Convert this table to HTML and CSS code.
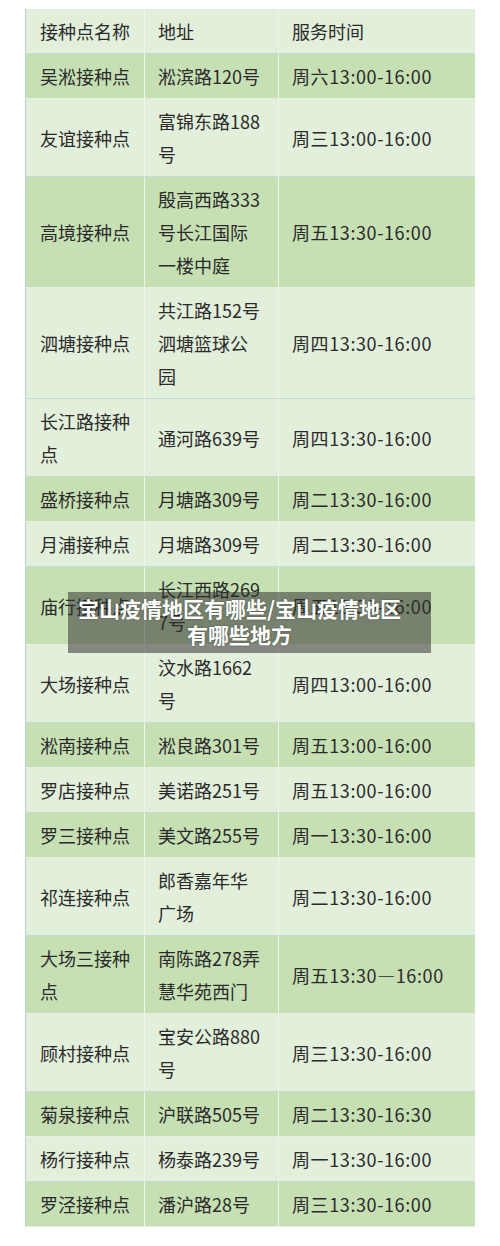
FILE: index.html
```html
<!DOCTYPE html>
<html lang="zh-CN">
<head>
<meta charset="utf-8">
<title>宝山疫情地区有哪些</title>
<link rel="stylesheet" href="styles.css">
</head>
<body>
<div class="page">
  <table class="sites">
    <colgroup>
      <col class="c-name">
      <col class="c-addr">
      <col class="c-time">
    </colgroup>
    <tr class="light"><td>接种点名称</td><td>地址</td><td>服务时间</td></tr>
    <tr class="dark"><td>吴淞接种点</td><td>淞滨路120号</td><td class="time">周六13:00-16:00</td></tr>
    <tr class="light"><td>友谊接种点</td><td>富锦东路188<br>号</td><td class="time">周三13:00-16:00</td></tr>
    <tr class="dark"><td>高境接种点</td><td>殷高西路333<br>号长江国际<br>一楼中庭</td><td class="time">周五13:30-16:00</td></tr>
    <tr class="light"><td>泗塘接种点</td><td>共江路152号<br>泗塘篮球公<br>园</td><td class="time">周四13:30-16:00</td></tr>
    <tr class="light"><td>长江路接种<br>点</td><td>通河路639号</td><td class="time">周四13:30-16:00</td></tr>
    <tr class="dark"><td>盛桥接种点</td><td>月塘路309号</td><td class="time">周二13:30-16:00</td></tr>
    <tr class="light"><td>月浦接种点</td><td>月塘路309号</td><td class="time">周二13:30-16:00</td></tr>
    <tr class="dark"><td>庙行接种点</td><td>长江西路269<br>7号</td><td class="time">周五13:30-16:00</td></tr>
    <tr class="light"><td>大场接种点</td><td>汶水路1662<br>号</td><td class="time">周四13:00-16:00</td></tr>
    <tr class="dark"><td>淞南接种点</td><td>淞良路301号</td><td class="time">周五13:00-16:00</td></tr>
    <tr class="light"><td>罗店接种点</td><td>美诺路251号</td><td class="time">周五13:00-16:00</td></tr>
    <tr class="dark"><td>罗三接种点</td><td>美文路255号</td><td class="time">周一13:30-16:00</td></tr>
    <tr class="light"><td>祁连接种点</td><td>郎香嘉年华<br>广场</td><td class="time">周二13:30-16:00</td></tr>
    <tr class="dark"><td>大场三接种<br>点</td><td>南陈路278弄<br>慧华苑西门</td><td class="time">周五13:30—16:00</td></tr>
    <tr class="light"><td>顾村接种点</td><td>宝安公路880<br>号</td><td class="time">周三13:30-16:00</td></tr>
    <tr class="dark"><td>菊泉接种点</td><td>沪联路505号</td><td class="time">周二13:30-16:30</td></tr>
    <tr class="light"><td>杨行接种点</td><td>杨泰路239号</td><td class="time">周一13:30-16:00</td></tr>
    <tr class="dark"><td>罗泾接种点</td><td>潘沪路28号</td><td class="time">周三13:30-16:00</td></tr>
  </table>
  <div class="caption">宝山疫情地区有哪些/宝山疫情地区有哪些地方</div>
</div>
</body>
</html>
```
FILE: styles.css
```css
html, body {
  margin: 0;
  padding: 0;
  background: #ffffff;
}

.page {
  position: relative;
  width: 500px;
  height: 1246px;
  padding-top: 9px;
  box-sizing: border-box;
  font-family: "Noto Sans CJK SC", "Noto Sans", sans-serif;
}

.sites {
  margin-left: 25px;
  width: 449px;
  border-collapse: collapse;
  table-layout: fixed;
  border-left: 1px solid #b9cfd6;
  color: #2a2a2a;
  font-size: 18px;
  line-height: 33px;
}

.c-name { width: 119px; }
.c-addr { width: 134px; }
.c-time { width: 196px; }

.sites td {
  padding: 6px 0 5px 13px;
  vertical-align: middle;
  white-space: nowrap;
  border-left: 1px solid #eef5e9;
}

.sites td:first-child {
  padding-left: 14px;
  border-left: none;
}

.sites td.time {
  letter-spacing: 0.6px;
}

.light td {
  background: #e2efda;
  border-bottom: 1px solid #c5dadd;
}

.dark td {
  background: #c6e0b4;
  border-bottom: 1px solid #e6f0e0;
}

.caption {
  position: absolute;
  left: 68px;
  top: 592px;
  width: 363px;
  height: 61px;
  box-sizing: border-box;
  padding: 0 24px 3px 4px;
  display: flex;
  align-items: center;
  justify-content: center;
  text-align: center;
  background: rgba(45, 45, 45, 0.52);
  color: #ffffff;
  font-size: 21px;
  font-weight: 700;
  line-height: 26px;
  text-shadow: 0 0 2px rgba(0, 0, 0, 0.4);
}
```
